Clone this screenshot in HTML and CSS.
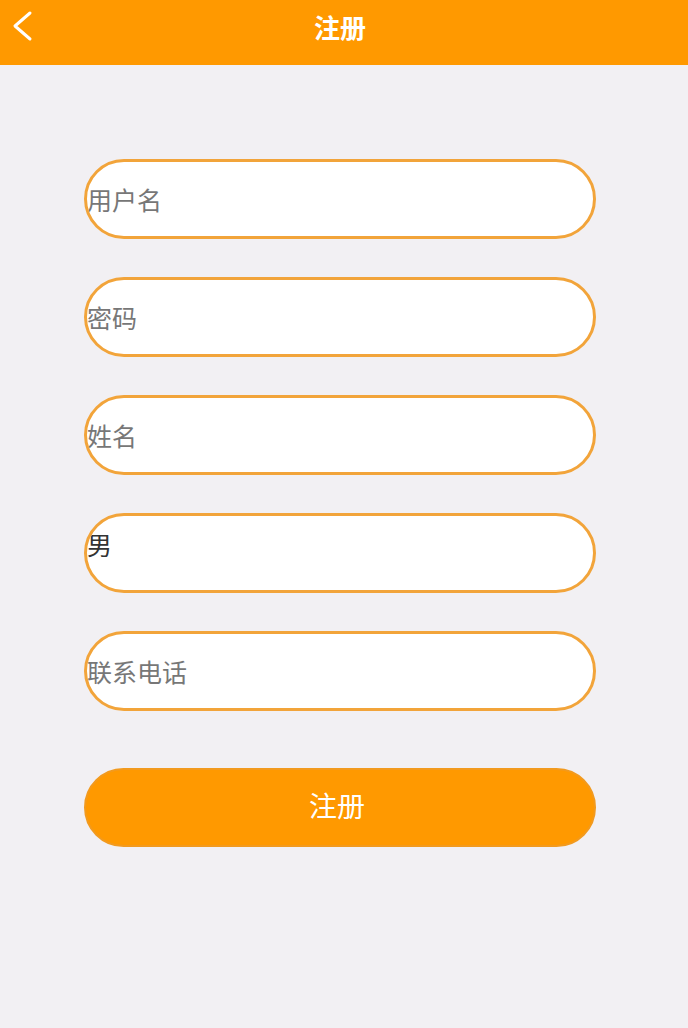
FILE: index.html
```html
<html>
    <head>
        <meta charset="utf-8">
        <link rel="stylesheet" href="styles.css">
    </head>
    <body>
        <div class="header">
            <svg class="back" width="24" height="32" viewBox="0 0 24 32">
                <polyline points="20,3 5,16 20,29" fill="none" stroke="#fff" stroke-width="3" stroke-linecap="round" stroke-linejoin="round"/>
            </svg>
            <h1 class="title">注册</h1>
        </div>
        <form class="form">
            <input class="field" type="text" placeholder="用户名">
            <input class="field" type="password" placeholder="密码">
            <input class="field" type="text" placeholder="姓名">
            <select class="field select">
                <option>男</option>
                <option>女</option>
            </select>
            <input class="field" type="text" placeholder="联系电话">
            <div class="btn">注册</div>
        </form>
    </body>
</html>
```

FILE: styles.css
```css
body {
    margin: 0;
    background-color: #F2F0F3;
    font-family: 'Noto Sans CJK SC', 'Noto Sans', sans-serif;
}
.header {
    position: relative;
    height: 65px;
    background-color: #FF9900;
    display: flex;
    align-items: center;
    justify-content: center;
}
.back {
    position: absolute;
    left: 10px;
    top: 10px;
}
.title {
    margin: 0 8px 12px 0;
    color: #fff;
    font-size: 26px;
    font-weight: bold;
}
.form {
    width: 512px;
    margin: 94px 0 0 84px;
    display: flex;
    flex-direction: column;
    gap: 38px;
}
.field {
    box-sizing: border-box;
    height: 80px;
    width: 100%;
    margin: 0;
    padding: 0;
    border: 3px solid #F2A43A;
    border-radius: 40px;
    background-color: #fff;
    font-family: inherit;
    font-size: 25px;
    color: #333;
    outline: none;
}
.field::placeholder {
    color: #777;
}
.select {
    appearance: none;
    -webkit-appearance: none;
    padding-bottom: 18px;
}
.btn {
    box-sizing: border-box;
    height: 79px;
    margin-top: 19px;
    border: 2px solid #F29A1E;
    border-radius: 40px;
    background-color: #FF9900;
    color: #fff;
    font-size: 28px;
    display: flex;
    align-items: center;
    justify-content: center;
    padding: 0 6px 6px 0;
    cursor: pointer;
}
```
